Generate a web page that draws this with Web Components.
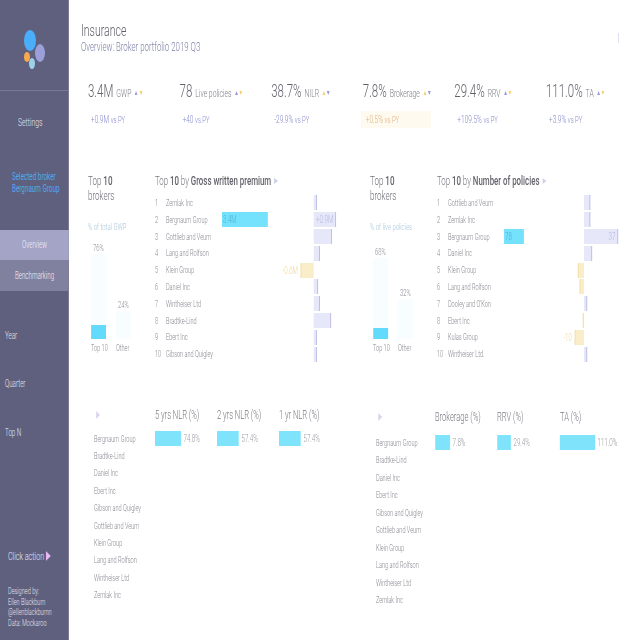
<!DOCTYPE html>
<html>
<head>
<meta charset="utf-8">
<title>Insurance</title>
<style>
  html, body { margin: 0; width: 640px; height: 640px; overflow: hidden; background: #fff; }
  body { font-family: Roboto, Lato, sans-serif; font-weight: 300; color: #6d6d78; }
</style>
</head>
<body>
<app-shell>
  <side-bar slot="side"></side-bar>
  <page-head heading="Insurance" sub="Overview: Broker portfolio 2019 Q3"></page-head>
  <kpi-row></kpi-row>
  <two-up>
    <section-panel
      share-label="% of total GWP" share-a="76" share-b="24" fill-a="14" pale-a="85" pale-b="28"
      metric="Gross written premium" cols="52,40"
      data='[["Zemlak Inc",0,"",3],["Bergnaum Group",46,"3.4M",22,"+0.9M"],["Gottlieb and Veum",0,"",18],["Lang and Rolfson",0,"",6],["Klein Group",0,"",-13,"-0.6M"],["Daniel Inc",0,"",4],["Wintheiser Ltd",0,"",6],["Bradtke-Lind",0,"",17],["Ebert Inc",0,"",3],["Gibson and Quigley",0,"",1]]'></section-panel>
    <section-panel
      share-label="% of live policies" share-a="68" share-b="32" fill-a="11" pale-a="81" pale-b="40"
      metric="Number of policies" cols="42,38"
      data='[["Gottlieb and Veum",0,"",6],["Zemlak Inc",0,"",6],["Bergnaum Group",20,"78",34,"37"],["Daniel Inc",0,"",8],["Klein Group",0,"",-6],["Lang and Rolfson",0,"",-4],["Dooley and O&apos;Kon",0,"",3],["Ebert Inc",0,"",-1],["Kulas Group",0,"",-9,"-10"],["Wintheiser Ltd.",0,"",3]]'></section-panel>
  </two-up>
  <two-up>
    <bench-table top="2" gap="7" step="17.4" cols="61,62,62"
      heads='["5 yrs NLR (%)","2 yrs NLR (%)","1 yr NLR (%)"]'
      first='[[26,"74.8%"],[22,"57.4%"],[22,"57.4%"]]'
      names='["Bergnaum Group","Bradtke-Lind","Daniel Inc","Ebert Inc","Gibson and Quigley","Gottlieb and Veum","Klein Group","Lang and Rolfson","Wintheiser Ltd","Zemlak Inc"]'></bench-table>
    <bench-table top="4" gap="9" step="17.5" cols="59,62,63"
      heads='["Brokerage (%)","RRV (%)","TA (%)"]'
      first='[[15,"7.8%"],[14,"29.4%"],[35,"111.0%"]]'
      names='["Bergnaum Group","Bradtke-Lind","Daniel Inc","Ebert Inc","Gibson and Quigley","Gottlieb and Veum","Klein Group","Lang and Rolfson","Wintheiser Ltd","Zemlak Inc"]'></bench-table>
  </two-up>
</app-shell>

<script>
// the whole dashboard is squeezed horizontally, so layout widths are given in screen px and divided here
const SQUEEZE = 0.62;
const x = n => (n / SQUEEZE).toFixed(2) + 'px';

const tri = (dir, color, w, h) => {
  const pts = dir === 'up' ? '0,10 5,0 10,10' : dir === 'down' ? '0,0 10,0 5,10' : '0,0 10,5 0,10';
  return '<svg viewBox="0 0 10 10" preserveAspectRatio="none" width="' + w + '" height="' + h + '" style="display:inline-block"><polygon points="' + pts + '" fill="' + color + '"/></svg>';
};

class AppShell extends HTMLElement {
  constructor() {
    super();
    const root = this.attachShadow({ mode: 'open' });
    root.innerHTML = `
      <style>
        :host { display: block; width: 640px; height: 640px; overflow: hidden; }
        .frame { display: flex; width: ${x(639.5)}; height: 640px; transform: scaleX(${SQUEEZE}); transform-origin: 0 0; filter: blur(0.4px); }
        .content { flex: 1; min-width: 0; padding-left: ${x(12)}; position: relative; }
        .tick { position: absolute; left: ${x(549)}; top: 33px; width: ${x(1)}; height: 10px; background: #cdd0e8; }
      </style>
      <div class="frame">
        <slot name="side"></slot>
        <div class="content"><div class="tick"></div><slot></slot></div>
      </div>`;
  }
}

class SideBar extends HTMLElement {
  constructor() {
    super();
    const root = this.attachShadow({ mode: 'open' });
    root.innerHTML = `
      <style>
        :host { display: flex; flex-direction: column; flex: none; width: ${x(69)}; height: 640px; background: #5f5f7e; color: #e9e9f1; font-size: 10.5px; }
        .logo { height: 91px; border-bottom: 1px solid #77779a; flex: none; box-sizing: border-box; }
        .logo svg { display: block; }
        .settings { height: 20px; line-height: 20px; margin-top: 22px; padding-left: ${x(18)}; font-size: 11px; }
        .broker { margin-top: 38px; height: 58px; padding-left: ${x(12)}; color: #4ea9ee; font-size: 10.2px; line-height: 12px; font-weight: 400; }
        .nav { text-align: center; font-size: 10px; color: #f2f2f8; }
        .nav.on { background: #a4a4c6; margin-top: 1px; height: 30px; line-height: 30px; }
        .nav.off { background: #80809f; height: 31px; line-height: 31px; }
        .filter { height: 14px; line-height: 14px; padding-left: ${x(5)}; font-size: 10px; }
        .click { margin-top: 109px; height: 14px; line-height: 14px; padding-left: ${x(8)}; font-size: 11.5px; display: flex; align-items: center; gap: ${x(2)}; }
        .credit { margin-top: 23px; padding-left: ${x(8)}; font-size: 9px; line-height: 10.5px; }
      </style>
      <div class="logo">
        <svg width="${x(69)}" height="90" viewBox="0 0 69 90" preserveAspectRatio="none">
          <ellipse cx="30" cy="40.5" rx="6" ry="10.5" fill="#4aaefc"/>
          <ellipse cx="40" cy="53" rx="5" ry="9" fill="#9d9fd8"/>
          <ellipse cx="27" cy="57" rx="3" ry="5" fill="#f9a94e"/>
          <ellipse cx="32" cy="63.5" rx="3" ry="5.5" fill="#9fd0ea"/>
        </svg>
      </div>
      <div class="settings">Settings</div>
      <div class="broker">Selected broker<br>Bergnaum Group</div>
      <div class="nav on">Overview</div>
      <div class="nav off">Benchmarking</div>
      <div class="filter" style="margin-top:38px">Year</div>
      <div class="filter" style="margin-top:34px">Quarter</div>
      <div class="filter" style="margin-top:35px">Top N</div>
      <div class="click">Click action ${tri('right', '#e6b8f5', x(5), 10)}</div>
      <div class="credit">Designed by:<br>Ellen Blackburn<br>@ellenblackburnn<br>Data: Mockaroo</div>`;
  }
}

class PageHead extends HTMLElement {
  constructor() {
    super();
    const root = this.attachShadow({ mode: 'open' });
    root.innerHTML = `
      <style>
        :host { display: block; height: 70px; box-sizing: border-box; padding-top: 22px; }
        .t { font-size: 17px; line-height: 17px; color: #5d5d68; }
        .s { font-size: 12.7px; line-height: 16px; color: #7f84a8; }
      </style>
      <div class="t">${this.getAttribute('heading')}</div>
      <div class="s">${this.getAttribute('sub')}</div>`;
  }
}

const KPIS = [
  ['3.4M', 'GWP', '+0.9M', '#9a9adf', '#f6cf68'],
  ['78', 'Live policies', '+40', '#9a9adf', '#f6cf68'],
  ['38.7%', 'NILR', '-29.9%', '#f6cf68', '#9a9adf'],
  ['7.8%', 'Brokerage', '+0.5%', '#f6cf68', '#9a9adf', true],
  ['29.4%', 'RRV', '+109.5%', '#9a9adf', '#f6cf68'],
  ['111.0%', 'TA', '+3.9%', '#9a9adf', '#f6cf68']
];

class KpiRow extends HTMLElement {
  constructor() {
    super();
    const root = this.attachShadow({ mode: 'open' });
    let output = '';
    for (let i = 0; i < KPIS.length; i++) {
      const k = KPIS[i];
      output += '<div class="kpi"><div class="top"><span class="v">' + k[0] + '</span><span class="l">' + k[1] + '</span>' +
        tri('up', k[3], x(3), 4) + tri('down', k[4], x(3), 4) + '</div>' +
        '<div class="d' + (k[5] ? ' warn' : '') + '">' + k[2] + ' <small>vs PY</small></div></div>';
    }
    root.innerHTML = `
      <style>
        :host { display: grid; grid-template-columns: repeat(6, ${x(91.6)}); height: 100px; box-sizing: border-box; padding: 10px 0 0 ${x(7)}; align-content: start; }
        .top { display: flex; align-items: baseline; height: 22px; line-height: 22px; gap: ${x(1.5)}; white-space: nowrap; }
        .top svg { align-self: center; position: relative; top: 2px; }
        .v { font-size: 18.5px; color: #63636e; }
        .l { font-size: 11px; margin: 0 ${x(2)} 0 ${x(1.5)}; color: #7b7b86; }
        .d { margin: 9px 0 0 ${x(-2)}; padding-left: ${x(5)}; width: ${x(65)}; height: 17px; line-height: 17px; font-size: 10.5px; color: #8688c9; white-space: nowrap; }
        .d small { font-size: 9.5px; }
        .d.warn { background: #fffaf0; color: #e0b079; }
      </style>` + output;
  }
}

class TwoUp extends HTMLElement {
  constructor() {
    super();
    const root = this.attachShadow({ mode: 'open' });
    root.innerHTML = `
      <style>
        :host { display: grid; grid-template-columns: ${x(282)} ${x(269)}; padding-left: ${x(7)}; }
      </style>
      <slot></slot>`;
  }
}

class SectionPanel extends HTMLElement {
  constructor() {
    super();
    const root = this.attachShadow({ mode: 'open' });
    const get = name => this.getAttribute(name);
    const rows = JSON.parse(get('data'));
    const cols = get('cols').split(',').map(Number);
    let output = '';
    for (let i = 0; i < rows.length; i++) {
      const r = rows[i];
      const delta = r[3];
      const label = r[4] ? '<span class="dl">' + r[4] + '</span>' : '';
      output += '<div class="row"><span class="rank">' + (i + 1) + '</span><span class="name">' + r[0] + '</span>' +
        '<span class="val">' + (r[1] ? '<span class="bar" style="width:' + x(r[1]) + '">' + r[2] + '</span>' : '') + '</span>' +
        '<span class="neg">' + (delta < 0 ? label + '<span class="nb" style="width:' + x(-delta) + '"></span>' : '') + '</span>' +
        '<span class="pos">' + (delta > 0 ? '<span class="pb" style="width:' + x(delta) + '">' + label + '</span>' : '') + '</span></div>';
    }
    root.innerHTML = `
      <style>
        :host { display: grid; grid-template-columns: ${x(67)} 1fr; height: 235px; box-sizing: border-box; padding-top: 3px; }
        .h { font-size: 13px; line-height: 15px; color: #70707a; }
        .h b { font-weight: 500; color: #63636c; }
        .pct { margin-top: 18px; height: 12px; line-height: 12px; font-size: 9.5px; color: #a8c6d8; white-space: nowrap; }
        .chart { display: flex; align-items: flex-end; gap: ${x(10)}; height: 106px; padding-left: ${x(3)}; font-size: 9.5px; color: #8a8a94; }
        .c { width: ${x(15)}; text-align: center; display: flex; flex-direction: column; justify-content: flex-end; }
        .c .p { height: 12px; line-height: 12px; }
        .pale { background: #f8fdff; display: flex; align-items: flex-end; }
        .fill { background: #62dafb; width: 100%; }
        .names { display: flex; gap: ${x(10)}; padding-left: ${x(3)}; font-size: 9px; line-height: 12px; margin-top: 3px; color: #85858f; }
        .names span { width: ${x(15)}; white-space: nowrap; }
        .title { font-size: 12.7px; line-height: 16px; height: 16px; color: #787882; white-space: nowrap; display: flex; align-items: center; gap: ${x(3)}; }
        .title b { font-weight: 500; color: #63636c; }
        .title span { white-space: pre; }
        .rows { margin-top: 5.6px; }
        .row { display: grid; grid-template-columns: ${x(11)} ${x(56)} ${x(cols[0])} ${x(cols[1])} ${x(cols[1])}; height: 16.8px; align-items: center; font-size: 9px; color: #85858f; white-space: nowrap; }
        .rank { font-size: 9px; }
        .bar { display: block; height: 15px; line-height: 15px; background: #74e2fc; color: #52b0d0; font-size: 10px; padding-left: ${x(1)}; box-sizing: border-box; }
        .neg { display: flex; justify-content: flex-end; align-items: center; gap: ${x(3)}; }
        .nb { display: block; height: 15px; background: #faeeca; border-left: ${x(1)} solid #efd28c; box-sizing: border-box; }
        .pb { display: block; height: 15px; line-height: 15px; background: #e6e8f9; border-right: ${x(1)} solid #a5a7d8; box-sizing: border-box; text-align: right; padding-right: ${x(2)}; }
        .dl { color: #b3b5e2; font-size: 10px; }
        .neg .dl { color: #f2d594; }
      </style>
      <div class="share">
        <div class="h">Top <b>10</b><br>brokers</div>
        <div class="pct">${get('share-label')}</div>
        <div class="chart">
          <div class="c"><div class="p">${get('share-a')}%</div><div class="pale" style="height:${get('pale-a')}px"><div class="fill" style="height:${get('fill-a')}px"></div></div></div>
          <div class="c"><div class="p">${get('share-b')}%</div><div class="pale" style="height:${get('pale-b')}px"></div></div>
        </div>
        <div class="names"><span>Top 10</span><span>Other</span></div>
      </div>
      <div class="rank-side">
        <div class="title"><span>Top <b>10</b> by <b>${get('metric')}</b></span>${tri('right', '#cbcfec', x(4), 6)}</div>
        <div class="rows">${output}</div>
      </div>`;
  }
}

class BenchTable extends HTMLElement {
  constructor() {
    super();
    const root = this.attachShadow({ mode: 'open' });
    const get = name => this.getAttribute(name);
    const cols = get('cols').split(',').map(Number);
    const heads = JSON.parse(get('heads'));
    const first = JSON.parse(get('first'));
    const names = JSON.parse(get('names'));
    let output = '<div class="row head"><span class="mark">' + tri('right', '#dcd0ee', x(4), 8) + '</span>';
    for (let i = 0; i < heads.length; i++) {
      output += '<span>' + heads[i] + '</span>';
    }
    output += '</div>';
    for (let i = 0; i < names.length; i++) {
      output += '<div class="row"><span>' + names[i] + '</span>';
      if (i === 0) {
        for (let j = 0; j < first.length; j++) {
          output += '<span class="cell"><span class="bar" style="width:' + x(first[j][0]) + '"></span><span class="num">' + first[j][1] + '</span></span>';
        }
      }
      output += '</div>';
    }
    root.innerHTML = `
      <style>
        :host { display: block; box-sizing: border-box; padding: ${get('top')}px 0 0 ${x(6)}; }
        .row { display: grid; grid-template-columns: ${x(cols[0])} ${x(cols[1])} ${x(cols[2])} 1fr; height: ${get('step')}px; align-items: center; font-size: 9px; color: #85858f; white-space: nowrap; }
        .head { height: 16px; font-size: 12.2px; color: #797983; margin-bottom: ${get('gap')}px; }
        .mark { padding-left: ${x(2)}; display: flex; }
        .cell { display: flex; align-items: center; gap: ${x(2.5)}; }
        .bar { display: block; height: 15px; background: #7fe3fb; }
        .num { font-size: 10px; color: #9a9aa4; }
      </style>` + output;
  }
}

customElements.define('app-shell', AppShell);
customElements.define('side-bar', SideBar);
customElements.define('page-head', PageHead);
customElements.define('kpi-row', KpiRow);
customElements.define('two-up', TwoUp);
customElements.define('section-panel', SectionPanel);
customElements.define('bench-table', BenchTable);
</script>
</body>
</html>
